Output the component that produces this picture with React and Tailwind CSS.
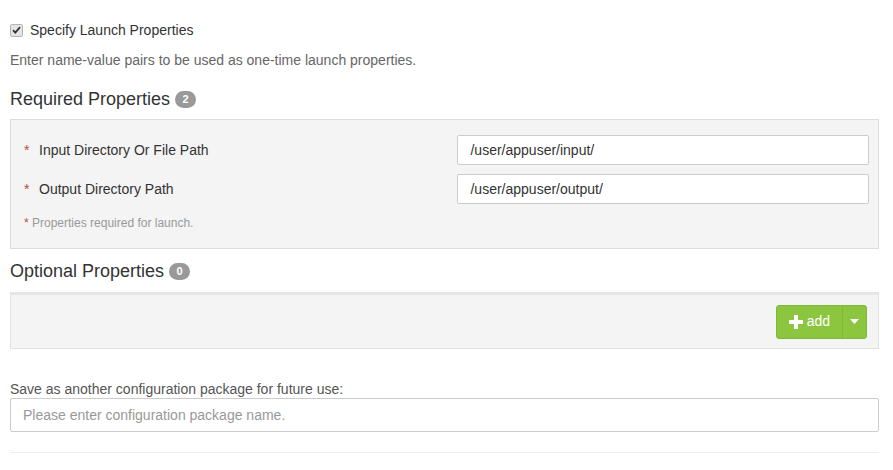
import React, { useState } from 'react';

const Badge = ({ count }) => (
    <span className="ml-[5px] inline-flex h-[17px] min-w-[21px] items-center justify-center rounded-full bg-[#999] px-[6px] text-[11px] font-bold leading-none text-white">
        {count}
    </span>
);

const PropertyRow = ({ label, value }) => (
    <div className="flex h-[30px] items-center">
        <div className="flex w-[434px] items-center text-[14px] text-[#333]">
            <span className="w-[15px] text-[#b94a48]">*</span>
            <span>{label}</span>
        </div>
        <input
            type="text"
            defaultValue={value}
            className="h-[30px] w-[412px] rounded-[2px] border border-[#ccc] bg-white px-[12px] text-[14px] text-[#333] outline-none"
        />
    </div>
);

const App = () => {
    const [specify, setSpecify] = useState(true);

    return (
        <div className="w-[893px] bg-white pl-[10px] pr-[14px] pt-[22px] font-['Liberation_Sans',Arial,sans-serif] text-[#333]">
            <label className="flex h-[16px] cursor-pointer items-center text-[14px] text-[#333]">
                <span
                    onClick={() => setSpecify(!specify)}
                    className="mr-[7px] flex h-[13px] w-[13px] items-center justify-center rounded-[2px] border border-[#b5b5b5] bg-[#e4e4e4]"
                >
                    {specify && (
                        <svg width="9" height="8" viewBox="0 0 9 8">
                            <path d="M1 4.2l2.3 2.4L8 1.2" stroke="#333" strokeWidth="1.8" fill="none" />
                        </svg>
                    )}
                </span>
                Specify Launch Properties
            </label>
            <p className="mt-[14px] text-[14px] leading-[16px] text-[#666]">
                Enter name-value pairs to be used as one-time launch properties.
            </p>

            <h3 className="mt-[20px] flex items-center text-[18px] leading-[22px] text-[#333]">
                Required Properties <Badge count="2" />
            </h3>
            <div className="mt-[9px] h-[130px] border border-[#ddd] bg-[#f4f4f4] pl-[13px] pr-[9px] pt-[15px]">
                <div className="flex flex-col gap-[9px]">
                    <PropertyRow label="Input Directory Or File Path" value="/user/appuser/input/" />
                    <PropertyRow label="Output Directory Path" value="/user/appuser/output/" />
                </div>
                <p className="mt-[12px] text-[12px] leading-[14px] text-[#999]">
                    <span className="text-[#b94a48]">*</span> Properties required for launch.
                </p>
            </div>

            <h3 className="mt-[11px] flex items-center text-[18px] leading-[22px] text-[#333]">
                Optional Properties <Badge count="0" />
            </h3>
            <div className="mt-[10px] flex h-[57px] items-center justify-end border border-t-[3px] border-[#e2e2e2] border-t-[#e6e6e6] bg-[#f4f4f4] pr-[11px]">
                <div className="flex h-[34px] overflow-hidden rounded-[3px] border border-[#7fb93a] bg-[#8cc63f] text-white">
                    <button type="button" className="flex items-center gap-[4px] px-[12px] text-[14px]">
                        <svg width="14" height="14" viewBox="0 0 14 14">
                            <path d="M5 0h4v5h5v4H9v5H5V9H0V5h5z" fill="#fff" />
                        </svg>
                        add
                    </button>
                    <button type="button" className="flex w-[24px] items-center justify-center border-l border-[#7fb93a]">
                        <svg width="9" height="5" viewBox="0 0 9 5">
                            <path d="M0 0h9L4.5 5z" fill="#fff" />
                        </svg>
                    </button>
                </div>
            </div>

            <div className="mt-[32px] text-[14px] leading-[16px] text-[#555]">
                Save as another configuration package for future use:
            </div>
            <input
                type="text"
                placeholder="Please enter configuration package name."
                className="mt-[1px] h-[34px] w-full rounded-[2px] border border-[#ccc] bg-white px-[12px] text-[14px] text-[#333] outline-none placeholder:text-[#999]"
            />
            <hr className="mt-[20px] border-t border-[#eee]" />
        </div>
    );
};

export default App;
